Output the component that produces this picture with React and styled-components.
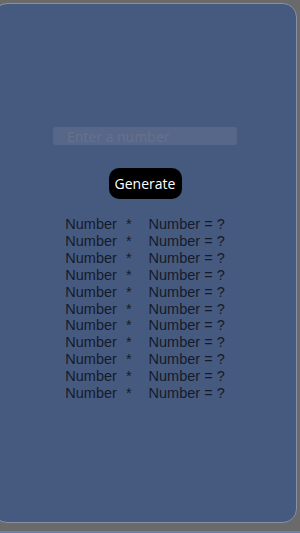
import React from 'react';
import styled, { createGlobalStyle } from 'styled-components';

const GlobalStyle = createGlobalStyle`
  html, body {
    margin: 0;
    padding: 0;
    background: #6a6a6a;
    font-family: "Open Sans", "Liberation Sans", sans-serif;
  }
`

const rows = Array.from({ length: 11 })

const App = () => {
  return (
    <Page>
      <GlobalStyle />
      <Card>
        <NumberInput type='text' placeholder='Enter a number' />
        <GenerateButton>Generate</GenerateButton>
        <Table>
          {rows.map((_, i) => (
            <Row key={i}>
              <Cell>Number</Cell>
              <Star>*</Star>
              <Cell>Number = ?</Cell>
            </Row>
          ))}
        </Table>
      </Card>
      <Strip />
    </Page>
  )
}

const Page = styled.div`
  width: 300px;
  height: 533px;
  overflow: hidden;
  display: flex;
  flex-direction: column;
  padding-top: 3px;
  box-sizing: border-box;
`

const Card = styled.div`
  width: 304px;
  height: 520px;
  margin-left: -7px;
  flex-shrink: 0;
  box-sizing: border-box;
  background: #465a80;
  border-radius: 14px;
  border: 1px solid #8790a4;
  display: flex;
  flex-direction: column;
  align-items: center;
  padding-top: 123px;
`

const NumberInput = styled.input`
  width: 184px;
  height: 18px;
  box-sizing: border-box;
  border: none;
  outline: none;
  border-radius: 3px;
  background: #56678a;
  padding: 0 0 0 14px;
  font-family: "Open Sans", "Liberation Sans", sans-serif;
  font-size: 14px;
  color: #6b7280;
  &::placeholder {
    color: #69718a;
  }
`

const GenerateButton = styled.button`
  margin-top: 23px;
  width: 73px;
  height: 31px;
  border: none;
  border-radius: 10px;
  background: #000;
  color: #fff;
  font-family: "Open Sans", "Liberation Sans", sans-serif;
  font-size: 14px;
  padding: 0;
`

const Table = styled.div`
  margin-top: 17px;
  display: flex;
  flex-direction: column;
  color: #151a2a;
  font-family: "Liberation Sans", Arial, sans-serif;
  font-size: 14.5px;
  line-height: 16.9px;
`

const Row = styled.div`
  display: flex;
  align-items: center;
`

const Cell = styled.span``

const Star = styled.span`
  margin: 0 17px 0 9px;
`

const Strip = styled.div`
  margin-top: 8px;
  height: 4px;
  background: #6f7fab;
`

export default App
